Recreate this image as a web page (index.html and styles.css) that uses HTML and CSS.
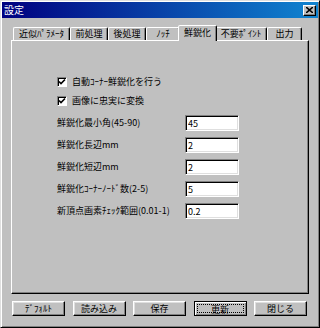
FILE: index.html
```html
<!DOCTYPE html>
<html lang="ja">
<head>
  <meta charset="UTF-8">
  <title>設定</title>
  <link rel="stylesheet" href="styles.css">
</head>
<body>
  <div class="window">
    <div class="titlebar">
      <span class="title">設定</span>
      <span class="close">
        <svg width="7" height="6" viewBox="0 0 7 6"><path d="M0 0L7 6M7 0L0 6" stroke="#000" stroke-width="1.6"/></svg>
      </span>
    </div>

    <div class="dialog">
      <div class="tabs">
        <div class="tab">近似ﾊﾟﾗﾒｰﾀ</div>
        <div class="tab">前処理</div>
        <div class="tab">後処理</div>
        <div class="tab">ﾉｯﾁ</div>
        <div class="tab active">鮮鋭化</div>
        <div class="tab">不要ﾎﾟｲﾝﾄ</div>
        <div class="tab">出力</div>
      </div>

      <div class="panel">
        <div class="options">
          <label class="option">
            <span class="check"><svg width="8" height="8" viewBox="0 0 8 8"><path d="M1 3.5L3 5.5L7 1.5" fill="none" stroke="#000" stroke-width="1.6"/></svg></span>
            自動ｺｰﾅｰ鮮鋭化を行う
          </label>
          <label class="option">
            <span class="check"><svg width="8" height="8" viewBox="0 0 8 8"><path d="M1 3.5L3 5.5L7 1.5" fill="none" stroke="#000" stroke-width="1.6"/></svg></span>
            画像に忠実に変換
          </label>
        </div>

        <div class="fields">
          <span class="field-label">鮮鋭化最小角(45-90)</span>
          <input class="field" type="text" value="45">
          <span class="field-label">鮮鋭化長辺mm</span>
          <input class="field" type="text" value="2">
          <span class="field-label">鮮鋭化短辺mm</span>
          <input class="field" type="text" value="2">
          <span class="field-label">鮮鋭化ｺｰﾅｰﾉｰﾄﾞ数(2-5)</span>
          <input class="field" type="text" value="5">
          <span class="field-label">新頂点画素ﾁｪｯｸ範囲(0.01-1)</span>
          <input class="field" type="text" value="0.2">
        </div>
      </div>

      <div class="buttons">
        <button class="btn">ﾃﾞﾌｫﾙﾄ</button>
        <button class="btn">読み込み</button>
        <button class="btn">保存</button>
        <button class="btn default"><span class="focus">更新</span></button>
        <button class="btn">閉じる</button>
      </div>
    </div>
  </div>
</body>
</html>
```

FILE: styles.css
```css
body {
  margin: 0;
  font-family: "Noto Sans CJK JP", "Noto Sans", sans-serif;
  font-size: 9px;
  color: #000;
  background: #c0c0c0;
}

.window {
  width: 320px;
  height: 328px;
  box-sizing: border-box;
  padding: 1px;
  background: #c0c0c0;
  border: 1px solid;
  border-color: #dfdfdf #000 #000 #dfdfdf;
  box-shadow: inset 1px 1px #fff, inset -1px -1px #808080;
}

.titlebar {
  height: 16px;
  display: flex;
  align-items: center;
  justify-content: space-between;
  padding: 0 2px 0 2px;
  background: linear-gradient(to right, #000080, #1084d0);
}

.title {
  color: #fff;
  font-size: 10px;
  line-height: 12px;
}

.close {
  width: 13px;
  height: 11px;
  box-sizing: border-box;
  display: flex;
  align-items: center;
  justify-content: center;
  background: #c0c0c0;
  border: 1px solid;
  border-color: #fff #000 #000 #fff;
  box-shadow: inset -1px -1px #808080;
}

.dialog {
  padding: 7px 9px 0;
}

.tabs {
  display: flex;
  height: 15px;
  padding-left: 2px;
  align-items: flex-end;
  position: relative;
  z-index: 1;
}

.tab {
  height: 13px;
  box-sizing: border-box;
  line-height: 12px;
  text-align: center;
  white-space: nowrap;
  border: 1px solid;
  border-bottom: none;
  border-color: #fff #000 transparent #fff;
  border-radius: 2px 2px 0 0;
  box-shadow: inset -1px 0 #808080;
}

.tab:nth-child(1) { width: 57px; }
.tab:nth-child(2) { width: 38px; }
.tab:nth-child(3) { width: 38px; }
.tab:nth-child(4) { width: 34px; }
.tab:nth-child(5) { width: 35px; }
.tab:nth-child(6) { width: 52px; }
.tab:nth-child(7) { width: 35px; }

.tab.active {
  width: 39px;
  height: 16px;
  margin: 0 -2px -1px;
  line-height: 14px;
  background: #c0c0c0;
  position: relative;
}

.panel {
  height: 254px;
  box-sizing: border-box;
  padding: 31px 0 0 45px;
  border: 1px solid;
  border-color: #fff #000 #000 #fff;
  box-shadow: inset -1px -1px #808080;
}

.options {
  display: flex;
  flex-direction: column;
}

.option {
  height: 19px;
  display: flex;
  align-items: center;
  gap: 5px;
  white-space: nowrap;
}

.check {
  width: 10px;
  height: 10px;
  box-sizing: border-box;
  display: flex;
  align-items: center;
  justify-content: center;
  background: #fff;
  border: 1px solid;
  border-color: #808080 #fff #fff #808080;
  box-shadow: inset 1px 1px #000;
}

.fields {
  display: grid;
  grid-template-columns: 128px 54px;
  row-gap: 6px;
  margin-top: 5px;
  align-items: center;
}

.field-label {
  white-space: nowrap;
  line-height: 16px;
}

.field {
  width: 54px;
  height: 16px;
  box-sizing: border-box;
  margin: 0;
  padding: 0 2px;
  font: inherit;
  color: #000;
  background: #fff;
  border: 1px solid;
  border-color: #808080 #fff #fff #808080;
  box-shadow: inset 1px 1px #000, inset -1px -1px #dfdfdf;
  outline: none;
}

.buttons {
  display: flex;
  justify-content: space-between;
  margin-top: 7px;
  padding: 0 2px 0 1px;
}

.btn {
  width: 53px;
  height: 15px;
  box-sizing: border-box;
  padding: 0;
  font: inherit;
  line-height: 12px;
  color: #000;
  background: #c0c0c0;
  border: 1px solid;
  border-color: #fff #000 #000 #fff;
  box-shadow: inset -1px -1px #808080, inset 1px 1px #dfdfdf;
}

.btn.default {
  border-color: #000;
  box-shadow: inset 1px 1px #fff, inset -1px -1px #808080;
  padding: 2px;
}

.focus {
  display: block;
  height: 100%;
  box-sizing: border-box;
  border: 1px dotted #000;
  line-height: 9px;
}
```
